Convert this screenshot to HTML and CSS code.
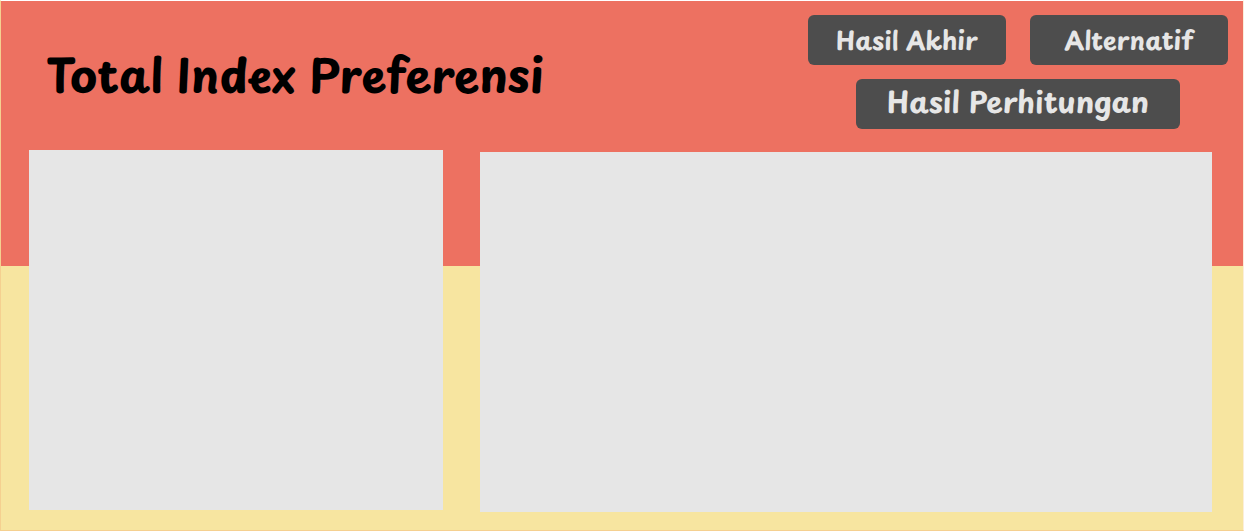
FILE: index.html
```html
<!DOCTYPE html>
<html lang="id">
<head>
<meta charset="utf-8">
<meta name="viewport" content="width=device-width, initial-scale=1">
<title>Total Index Preferensi</title>
<link rel="stylesheet" href="styles.css">
</head>
<body>
<div class="page">
  <header class="header">
    <h1 class="title">Total Index Preferensi</h1>
    <nav class="actions">
      <div class="action-row">
        <button class="action" type="button">Hasil Akhir</button>
        <button class="action" type="button">Alternatif</button>
      </div>
      <button class="action action-wide" type="button">Hasil Perhitungan</button>
    </nav>
  </header>
  <main class="panels">
    <section class="panel panel-left"></section>
    <section class="panel panel-right"></section>
  </main>
</div>
</body>
</html>
```
FILE: styles.css
```css
* {
  box-sizing: border-box;
}

body {
  margin: 0;
  font-family: "Playpen Sans", "Comic Neue", "Open Sans", sans-serif;
}

.page {
  display: flex;
  flex-direction: column;
  min-height: 100vh;
  padding: 14px 15px 18px 28px;
  border: 1px solid #f5d090;
  border-top-color: #fff;
  border-right-color: #fbeeda;
  background: linear-gradient(#ed7161 calc(50% + 1px), #f7e5a0 calc(50% + 1px));
}

.header {
  display: flex;
  justify-content: space-between;
  align-items: flex-start;
}

.title {
  margin: 24px 0 0 17px;
  font-size: 46px;
  line-height: 70px;
  font-weight: 700;
  color: #000;
}

.actions {
  display: flex;
  flex-direction: column;
  align-items: center;
  gap: 14px;
  flex: 0 0 420px;
}

.action-row {
  display: flex;
  gap: 24px;
  width: 100%;
}

.action {
  flex: 1;
  height: 50px;
  padding: 0;
  border: 0;
  border-radius: 6px;
  background: #4d4d4d;
  color: #e6e6e6;
  font-family: inherit;
  font-size: 25px;
  line-height: 50px;
  font-weight: 700;
  white-space: nowrap;
}

.action-wide {
  flex: none;
  width: 324px;
  padding-bottom: 6px;
  font-size: 29px;
  line-height: 44px;
}

.panels {
  display: flex;
  flex: 1;
  gap: 37px;
  margin: 21px 16px 0 0;
}

.panel {
  background: #e6e6e6;
}

.panel-left {
  flex: 414;
  margin-bottom: 2px;
}

.panel-right {
  flex: 732;
  margin-top: 2px;
}
```
